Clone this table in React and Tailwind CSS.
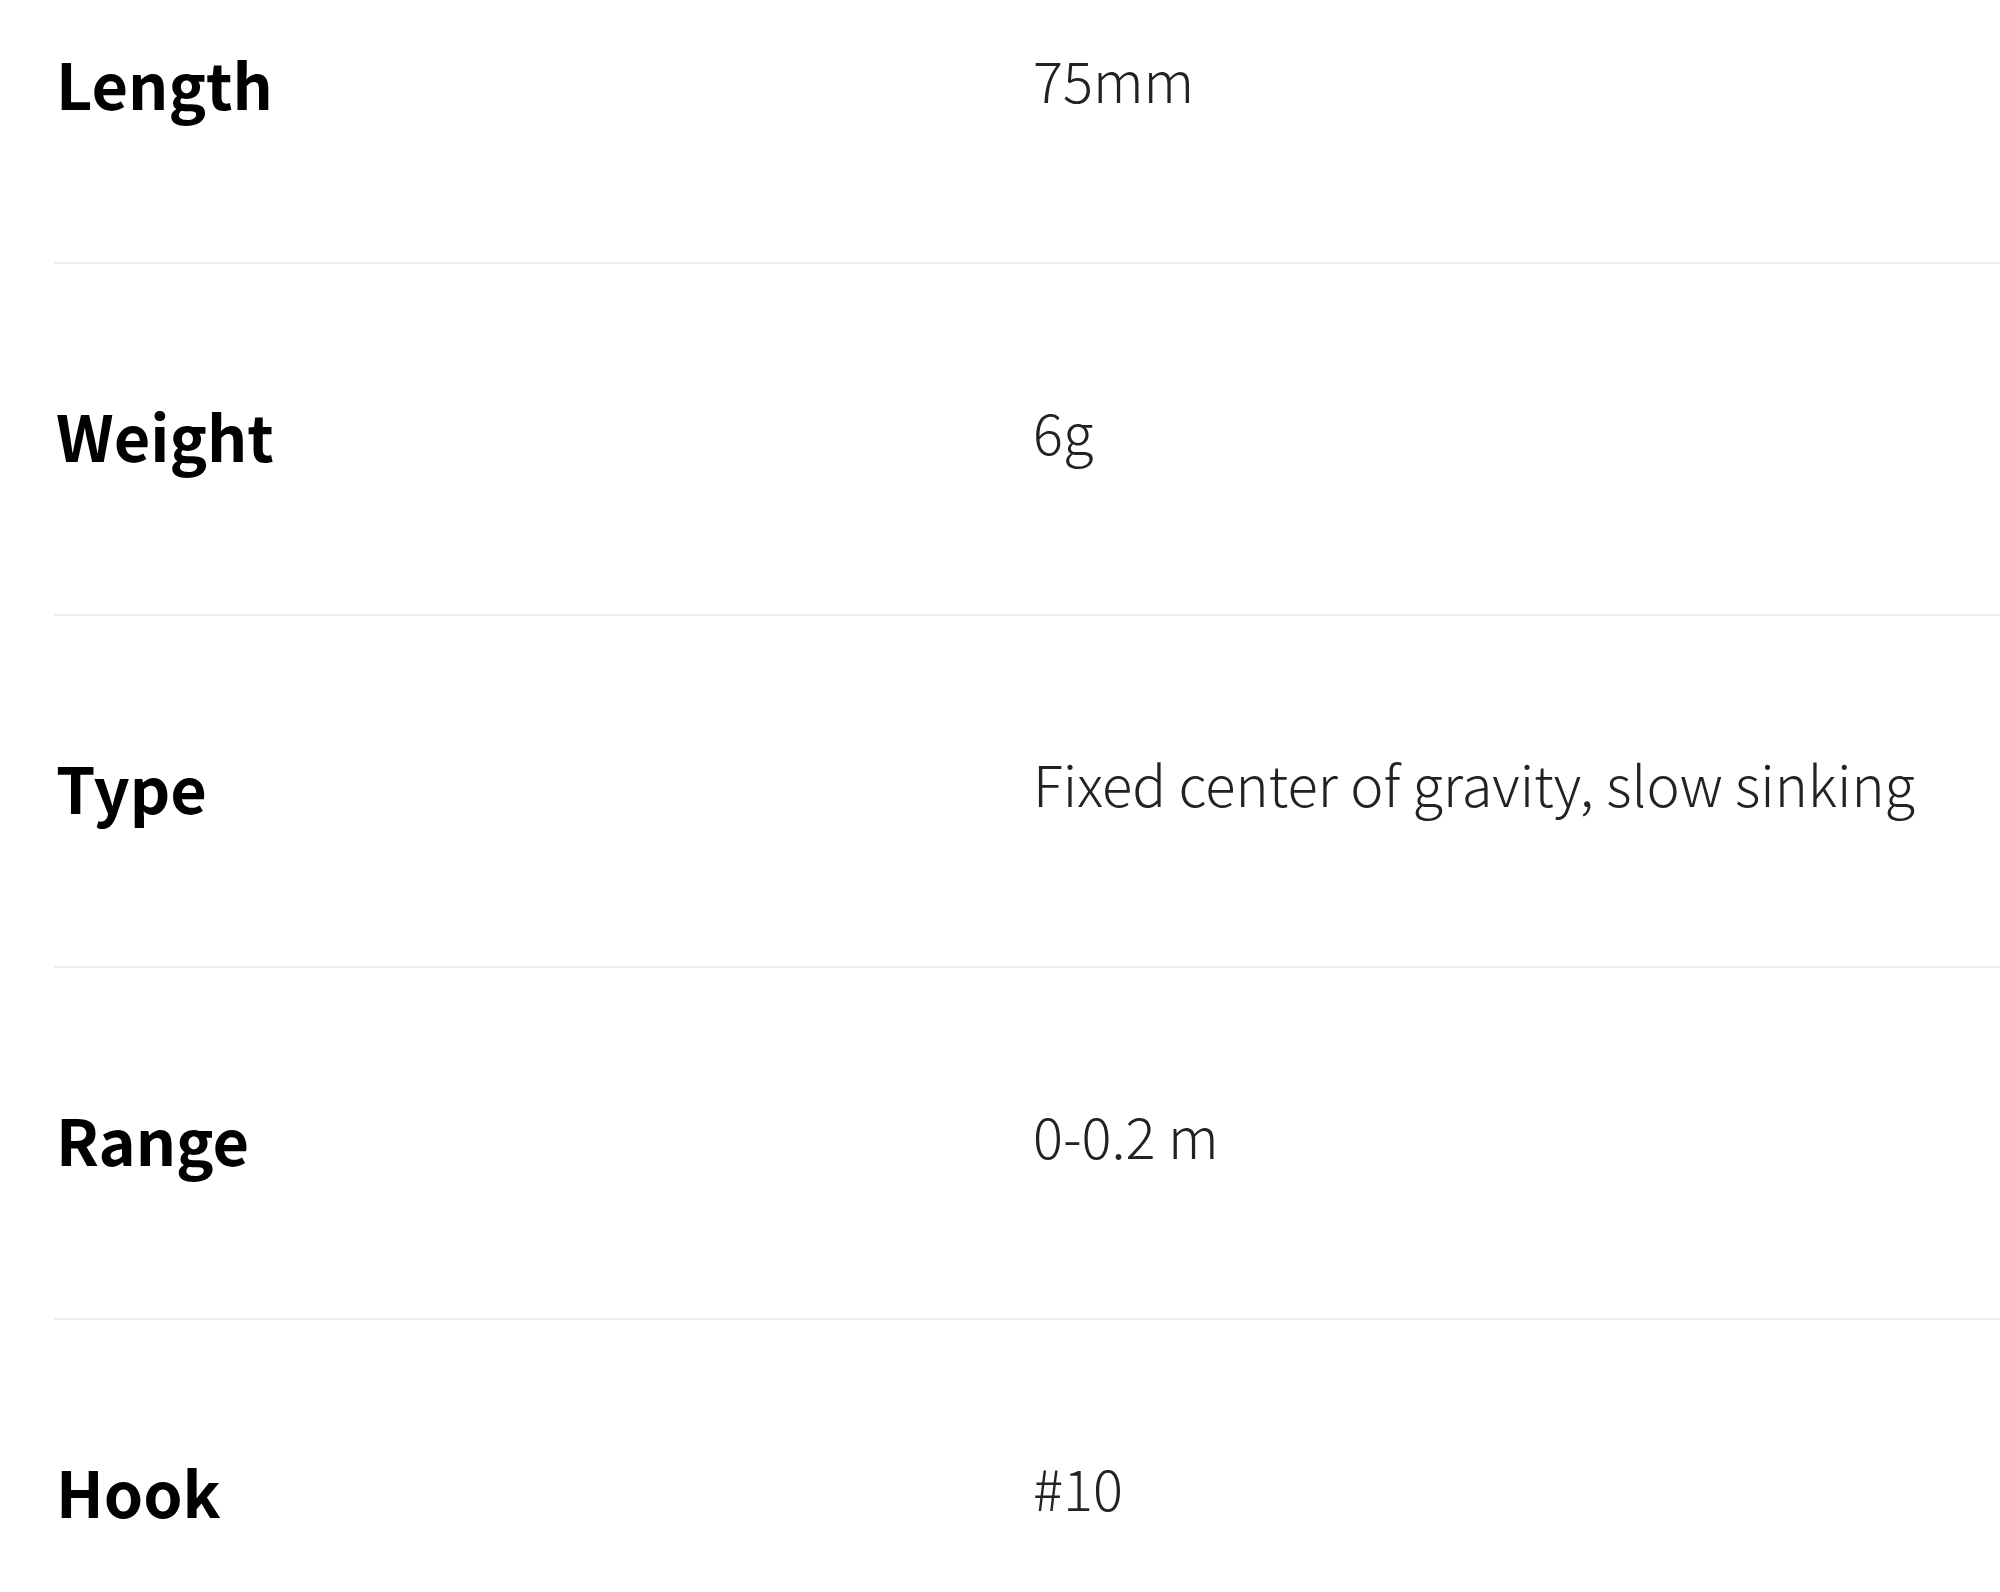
import React from 'react';

const specs = [
  { label: 'Length', value: '75mm' },
  { label: 'Weight', value: '6g' },
  { label: 'Type', value: 'Fixed center of gravity, slow sinking' },
  { label: 'Range', value: '0-0.2 m' },
  { label: 'Hook', value: '#10' },
];

export default function App() {
  return (
    <div className="w-[2000px] h-[1592px] overflow-hidden bg-white">
      <div className="-mt-[88px] pl-[54px]">
        {specs.map((s, i) => (
          <div
            key={s.label}
            className={`flex h-[352px] items-start pt-[136px] ${i < specs.length - 1 ? 'border-b-2 border-[#eeeeee]' : ''}`}
          >
            <div
              className="w-[979px] shrink-0 pl-[2px] text-[63px] font-bold leading-[1.1] text-black"
              style={{ fontFamily: '"Noto Sans CJK JP", "Noto Sans", sans-serif' }}
            >
              {s.label}
            </div>
            <div
              className="text-[56px] font-light leading-[1.1] text-[#222]"
              style={{ fontFamily: '"Noto Sans CJK JP", "Noto Sans", sans-serif' }}
            >
              {s.value}
            </div>
          </div>
        ))}
      </div>
    </div>
  );
}
